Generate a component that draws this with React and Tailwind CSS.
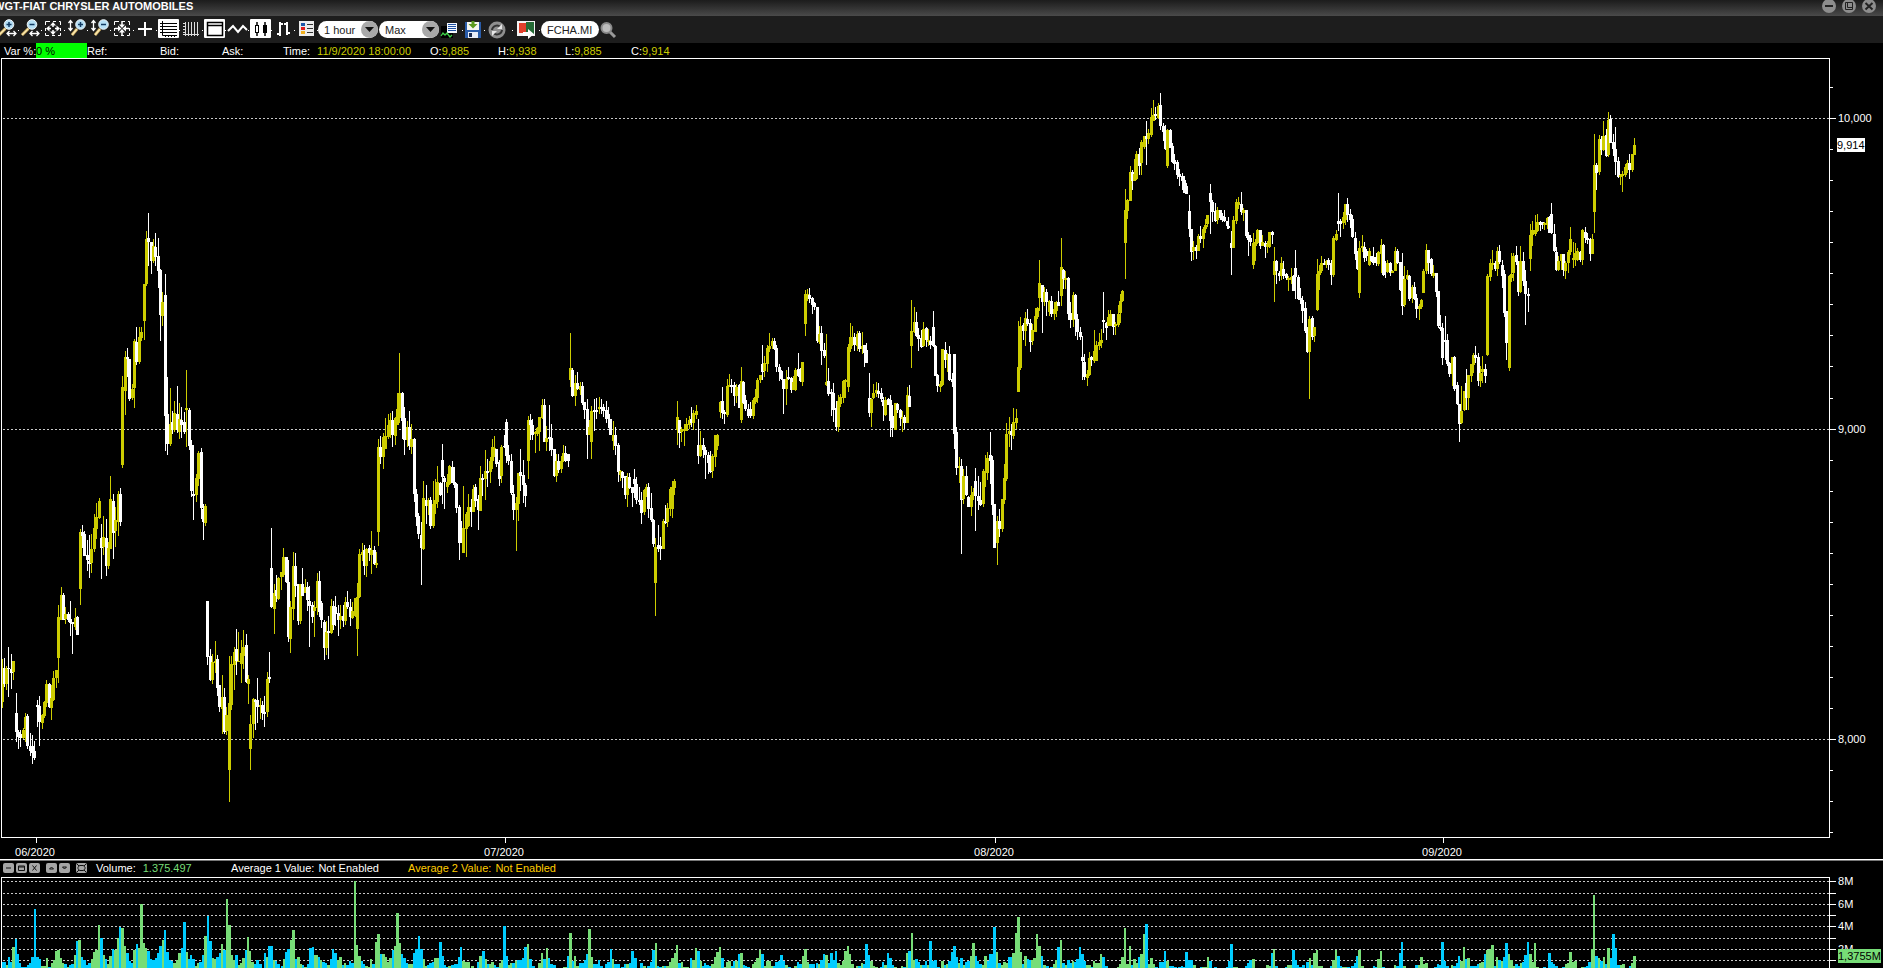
import { useState } from 'react';

const UP = '#cccc00';
const DOWN = '#ffffff';
const VOL_UP = '#77dd77';
const VOL_DOWN = '#00ccff';

// each block keeps its own origin and scale, a row is: side x high top bottom low
const PRICE_BLOCKS = [
    { x: -2, y: 121, sx: 3, sy: 2.45, rows: `
Y 7 1174 1200 1278 1293,W 13 1171 1196 1236 1242,Y 19 1191 1196 1235 1249,W 25 1144 1196 1199 1267,W 34 1161 1198 1207 1246,Y 40 1178 1178 1205 1224,
W 49 1257 1306 1352 1376,W 55 1347 1352 1365 1394,W 61 1348 1358 1368 1388,Y 70 1343 1348 1367 1370,Y 76 1306 1316 1346 1376,W 82 1308 1313 1387 1394,
W 91 1355 1387 1398 1411,W 97 1360 1387 1404 1430,W 103 1374 1399 1415 1422,W 112 1274 1286 1290 1340,W 118 1264 1289 1327 1387,Y 127 1308 1311 1330 1344,
Y 133 1276 1280 1312 1318,Y 139 1225 1235 1282 1290,W 148 1232 1235 1291 1294,Y 154 1237 1270 1294 1322,Y 160 1203 1220 1275 1276,Y 169 1200 1200 1220 1245,
Y 175 1041 1071 1171 1232,Y 184 997 1017 1077 1078,W 190 1012 1017 1077 1078,Y 196 1046 1064 1076 1089,W 205 1059 1063 1077 1083,W 211 1031 1076 1085 1117,
W 217 1083 1083 1088 1161,Y 226 1049 1074 1095 1102,W 232 1068 1071 1114 1115,Y 241 855 862 1002 1041,W 247 845 862 872 902,W 253 860 868 920 921,
W 262 881 918 932 958,W 268 870 933 941 975,Y 274 867 903 938 963,Y 283 818 853 905 911,Y 289 791 826 854 880,Y 297 779 786 827 830,
W 304 843 876 901 978,Y 310 823 875 900 919,W 319 831 876 946 970,Y 325 887 902 946 953,Y 331 725 782 904 905,W 340 769 786 864 929,
Y 346 801 833 860 899,Y 355 762 769 838 872,W 361 755 769 838 848,Y 367 480 507 698 706,Y 376 419 434 516 576,W 382 412 434 439 483,
W 388 438 438 536 541,Y 397 500 512 534 538,Y 403 390 394 510 559,W 409 360 396 446 453,Y 418 360 384 446 451,Y 424 360 373 387 395,
Y 433 254 256 346 392,Y 439 125 145 256 260,W 445 81 142 152 211,W 454 152 152 198 230,Y 460 145 162 198 203,W 466 130 163 189 211,
W 475 142 186 222 265,W 481 218 220 331 394,Y 487 274 300 332 358,W 496 230 282 577 664,W 502 483 573 646 674,Y 511 510 598 646 652,
W 517 565 593 612 623,Y 523 541 571 612 617,W 532 505 573 612 621,Y 538 546 586 617 635,W 544 556 589 600 632,W 553 568 593 617 622,
Y 559 465 559 563 654,W 568 559 563 652 661,W 574 637 650 762 777,W 580 649 770 774 833,Y 589 720 730 772 789,Y 595 664 669 733 750,
W 604 657 666 804 831,W 610 794 805 839 882,Y 616 794 799 840 848,W 623 1031 1031 1168 1188,W 631 1149 1166 1226 1228,Y 637 1161 1180 1226 1234,
Y 646 1129 1178 1183 1208,W 652 1164 1174 1245 1264,W 658 1237 1237 1290 1303,Y 667 1213 1267 1295 1357,W 673 1245 1267 1352 1357,Y 679 1291 1311 1350 1360,
Y 688 1166 1282 1445 1524,Y 694 1166 1187 1286 1298,Y 703 1144 1156 1188 1249,W 709 1100 1149 1178 1213,Y 715 1107 1178 1182 1181,Y 724 1127 1158 1187 1232,
Y 730 1102 1144 1166 1198,W 739 1112 1140 1230 1232,Y 745 1213 1223 1234 1284,Y 751 1311 1333 1394 1445,Y 760 1269 1272 1333 1367,W 766 1272 1273 1280 1347,
W 772 1220 1274 1290 1330,Y 781 1269 1287 1291 1321,W 787 1276 1287 1305 1323,W 793 1264 1303 1308 1340,Y 802 1205 1223 1303 1316,W 808 1156 1218 1223 1232,
W 814 853 951 1046 1049,Y 823 990 1012 1051 1112,W 829 968 1005 1018 1034,Y 835 973 975 1027 1030,Y 844 960 961 973 1005,Y 850 902 924 968 973,
W 859 924 924 986 987,W 865 931 985 1119 1132,Y 871 1031 1046 1124 1159,Y 880 911 946 1050 1078,W 886 914 946 995 1022,W 895 991 991 1080 1090,
Y 901 990 990 1080 1088,W 907 951 990 1018 1019,Y 916 978 997 1012 1013,W 922 985 996 1030 1056,W 928 995 1031 1043 1144,W 937 1034 1041 1070 1085,
Y 943 1031 1046 1056 1120,Y 952 963 982 1049 1066,W 958 958 982 1058 1071,W 964 1032 1036 1077 1098,W 973 1078 1083 1147 1176,Y 979 1080 1107 1147 1164,
W 985 1068 1105 1111 1174,Y 994 1027 1044 1111 1112,W 1000 1032 1044 1090 1102,W 1006 1019 1046 1063 1093,W 1015 1041 1061 1077 1117,Y 1021 1041 1068 1077 1100,
W 1030 1041 1069 1080 1094,Y 1036 1022 1034 1080 1090,W 1042 1007 1034 1046 1051,W 1051 1027 1046 1070 1093,Y 1057 1035 1057 1073 1076,Y 1066 1024 1024 1068 1070,
Y 1072 987 1022 1100 1166,Y 1078 904 916 1022 1024,Y 1087 889 911 919 933,W 1093 894 906 946 968,Y 1099 902 904 946 973,W 1108 894 902 914 933,
Y 1114 860 907 919 965,W 1123 897 906 941 943,Y 1129 911 938 943 951,Y 1135 635 654 862 897,W 1141 627 654 679 696,Y 1150 620 630 679 708,
Y 1156 583 628 659 660,Y 1165 573 600 630 634,Y 1171 571 587 617 632,W 1177 566 588 625 654,Y 1186 581 584 627 649,Y 1192 522 562 600 601,
Y 1198 424 522 583 596,W 1207 519 522 590 635,W 1213 557 583 636 674,Y 1222 590 604 636 654,W 1228 566 604 652 661,Y 1234 598 635 654 671,
W 1243 632 635 769 789,W 1249 757 769 826 848,W 1255 815 823 868 880,W 1264 838 870 902 992,Y 1270 737 779 904 907,W 1279 747 784 799 843,
Y 1285 779 783 799 821,W 1291 777 783 848 855,Y 1300 737 794 848 853,Y 1306 733 784 794 818,Y 1312 701 740 789 803,W 1321 740 742 771 773,
W 1327 647 686 728 794,W 1333 725 730 740 806,Y 1342 720 740 752 767,Y 1348 699 701 745 747,W 1357 688 703 742 743,W 1363 703 740 747 755,
W 1369 743 745 804 816,W 1378 796 801 889 931` },
    { x: 438, y: 211, sx: 3, sy: 3, rows: `
W 64 753 782 819 820,Y 71 648 775 848 849,Y 79 726 732 776 861,Y 85 672 711 768 770,W 94 687 712 726 771,Y 100 645 657 725 726,
W 106 642 651 692 711,W 115 675 687 720 780,Y 121 588 624 722 723,W 127 613 624 630 678,Y 136 540 604 627 690,W 142 567 603 610 651,
Y 151 562 574 606 639,Y 157 507 531 574 597,Y 163 498 534 560 561,W 170 537 537 582 591,W 178 570 576 627 648,Y 184 525 531 618 639,
W 193 495 528 532 533,W 199 447 456 558 579,W 205 525 556 573 585,W 214 552 573 669 675,W 220 645 672 719 750,Y 229 681 699 720 843,
Y 235 609 610 702 753,W 241 537 606 618 663,W 250 570 616 645 699,W 256 639 645 678 711,Y 264 438 450 573 627,W 271 432 450 465 510,
W 277 448 465 495 510,Y 286 484 486 492 549,Y 292 471 474 492 498,Y 298 441 442 486 543,Y 307 387 405 444 448,W 313 387 405 515 516,
Y 319 468 504 516 543,W 328 405 502 507 543,W 334 462 504 540 558,W 342 537 538 618 621,Y 349 552 573 618 636,W 355 552 573 600 609,
Y 364 557 573 598 609,Y 370 525 549 574 576,W 376 528 550 573 576,W 385 552 553 573 591,Y 391 189 294 330 351,W 397 294 299 378 381,
Y 406 315 339 378 408,W 412 306 339 357 360,Y 421 336 348 361 375,W 427 336 348 399 405,W 433 396 396 420 447,W 442 387 417 494 567,
Y 448 450 472 494 495,Y 455 408 423 516 567,W 463 387 420 426 483,W 469 384 420 426 447,Y 478 381 411 417 432,W 484 387 411 417 432,
W 490 402 411 424 441,W 499 393 421 448 459,W 505 411 433 447 474,W 511 447 447 495 496,Y 520 453 495 513 540,W 526 471 495 528 555,
W 534 519 525 606 636,Y 541 600 603 615 633,W 547 603 606 624 654,W 556 618 619 675 687,Y 562 609 621 675 711,W 568 609 621 655 657,
W 577 651 652 669 711,W 583 597 627 642 684,W 589 621 642 690 702,W 598 652 690 696 706,W 604 666 690 729 762,Y 613 657 660 726 735,
Y 619 642 651 672 681,W 625 639 651 716 744,W 634 669 714 750 756,W 640 747 750 822 831,Y 647 804 831 939 1038,W 655 765 825 837 846,
W 661 801 828 837 870,Y 669 747 753 837 838,W 676 705 753 759 762,Y 682 699 714 756 771,Y 691 651 657 716 738,Y 697 633 651 716 744,
Y 704 627 633 654 675,Y 712 393 441 480 525,W 718 450 450 488 534,Y 724 471 478 486 516,Y 733 462 477 483 528,Y 739 444 462 482 483,
Y 748 438 450 464 478,W 754 411 447 459 470,Y 760 420 430 459 480,Y 769 405 423 435 447,W 775 447 525 558 582,Y 781 483 525 558 561,
W 790 504 525 540 564,W 796 531 540 555 627,W 805 546 555 579 612,W 811 543 579 606 609,Y 817 552 558 603 624,Y 826 494 495 560 591,
Y 832 492 495 528 540,Y 840 393 396 426 444,W 847 351 393 429 447,W 853 421 426 432 462,Y 862 327 348 435 441,Y 868 312 345 350 351,
W 874 327 345 351 369,W 883 336 345 378 408,Y 889 342 351 378 399,W 898 342 346 414 415,Y 904 291 333 450 459,W 910 333 336 399 402,
W 916 375 390 418 424,W 925 402 417 438 444,W 931 396 418 438 444,Y 940 384 390 438 447,Y 946 357 381 396 402,Y 952 324 330 384 399,
Y 961 315 316 330 339,W 967 225 282 306 330,Y 973 258 279 303 321,Y 982 225 234 282 306,Y 988 189 228 236 246,Y 997 204 213 228 237,
W 1003 204 213 237 240,W 1009 225 234 291 306,W 1018 282 291 306 333,W 1024 300 303 327 330,W 1031 327 328 358 432,Y 1039 300 327 357 405,
W 1045 291 321 327 330,W 1053 321 324 361 369,Y 1060 318 336 360 361,Y 1066 294 300 360 363,W 1075 249 297 318 321,W 1081 294 312 333 336,
Y 1088 276 276 336 348,Y 1096 60 72 162 198,Y 1102 57 72 81 93,W 1108 54 74 87 99,W 1117 81 84 105 132,W 1123 96 99 111 120,
W 1132 111 111 213 219,Y 1138 168 192 216 222,W 1144 168 189 243 285,W 1152 219 240 258 264,Y 1159 192 336 345 348,W 1165 294 333 372 378,
W 1174 357 366 372 438,W 1180 339 369 420 456,W 1189 393 414 471 483,Y 1195 375 393 471 486,Y 1201 372 380 402 411,Y 1210 330 333 384 399,
Y 1216 327 330 336 384,Y 1224 222 230 351 366,Y 1231 159 201 237 246,Y 1237 168 201 208 228,W 1243 189 201 225 243,Y 1252 183 192 228 243,
W 1258 183 189 237 246,Y 1267 186 228 237 252,W 1273 225 225 249 291,W 1279 219 240 279 280,W 1288 309 384 430 441,Y 1294 384 386 429 471,
Y 1300 342 369 384 387,Y 1309 336 360 370 381,W 1315 339 363 372 384,W 1324 354 368 387 396,W 1330 381 390 408 453,Y 1336 381 390 435 438,
W 1345 384 388 405 406,W 1351 375 390 453 501,W 1357 405 438 474 501,Y 1366 399 400 480 480,W 1372 399 402 420 430,W 1381 417 420 444 468,
Y 1387 423 441 448 486,W 1393 435 441 459 477,Y 1401 351 375 458 459,W 1408 345 378 411 412` },
    { x: 858, y: 161, sx: 3, sy: 3, rows: `
Y 154 240 333 378 444,Y 163 261 306 336 339,W 169 276 306 348 350,W 175 324 346 357 393,W 184 330 354 381 384,Y 190 306 327 378 381,
W 199 321 324 360 381,Y 205 327 360 366 378,W 211 348 363 375 387,W 220 273 321 378 380,W 226 375 378 468 469,W 233 462 465 498 516,
Y 241 483 491 501 516,Y 247 387 388 495 498,W 256 366 390 420 444,Y 262 399 402 420 456,W 268 378 402 480 483,W 277 459 477 486 501,
W 283 402 402 642 687,W 290 621 636 744 765,Y 298 711 738 744 789,W 304 717 738 840 1002,Y 310 747 768 837 852,W 319 738 768 825 828,
W 325 828 831 861 862,Y 334 798 825 861 888,Y 340 804 816 825 840,W 346 744 783 828 933,W 355 768 828 843 870,W 361 786 840 855 858,
Y 369 747 753 852 861,Y 376 705 753 759 801,Y 382 696 714 759 780,W 391 636 705 723 792,W 397 708 720 855 885,W 403 852 852 984 985,
Y 411 888 903 969 1035,W 418 867 903 927 951,Y 426 837 837 927 936,Y 433 732 774 840 852,Y 439 609 642 777 783,Y 448 591 632 642 681,
W 454 612 633 645 690,Y 460 564 606 648 657,Y 469 567 594 609 627,Y 475 303 441 516 516,Y 481 291 318 444 450,W 490 309 315 333 360,
Y 496 276 294 333 378,W 502 267 297 312 318,W 511 297 309 366 396,Y 517 312 330 363 375,Y 526 264 288 336 337,Y 532 261 264 291 297,
Y 538 120 189 234 273,W 547 195 195 246 339,Y 553 201 216 246 258,W 559 207 216 246 288,Y 568 240 242 276 288,W 574 228 243 282 291,
Y 583 246 267 282 300,Y 589 243 246 272 291,W 595 213 246 258 258,Y 604 54 141 228 258,W 610 147 150 177 207,Y 616 153 174 180 207,
W 625 171 174 282 300,W 631 246 279 300 324,Y 640 216 225 300 321,W 646 222 225 297 348,W 652 282 297 336 360,W 661 321 336 351 360,
W 667 348 411 423 480,W 673 402 426 471 480,Y 682 450 462 474 498,Y 688 396 414 465 468,W 694 408 411 420 438,Y 703 330 393 423 429,
Y 709 363 375 423 424,Y 718 339 366 378 390,Y 724 327 360 369 384,W 730 216 300 306 339,W 739 306 308 324 360,Y 745 270 291 318 319,
Y 751 270 282 318 319,W 760 282 282 321 345,Y 766 306 312 318 345,Y 775 255 282 315 321,Y 781 222 243 279 309,Y 787 210 213 243 246` },
    { x: 1098, y: 21, sx: 2.8, sy: 3, rows: `
Y 71 327 390 488 597,Y 77 357 361 392 417,Y 84 258 276 363 364,W 91 270 277 303 330,Y 96 237 283 303 304,Y 103 213 222 298 300,
W 110 204 222 258 285,Y 116 180 186 249 285,Y 124 168 168 200 207,W 131 123 168 177 255,Y 136 147 160 178 192,Y 144 84 111 165 171,
Y 149 60 105 123 124,W 156 81 102 109 120,Y 163 69 78 114 117,W 169 39 75 138 150,W 177 129 138 156 183,W 183 135 150 207 210,
Y 189 147 150 258 264,W 197 147 150 204 205,W 203 189 198 246 249,W 209 222 240 252 270,W 216 240 246 284 297,W 223 267 282 291 318,
W 231 279 288 303 330,W 236 288 300 339 340,W 242 309 318 342 342,W 250 345 393 447 471,W 256 447 447 515 543,Y 262 483 501 513 540,
W 270 495 501 513 537,Y 275 462 468 513 514,W 282 438 468 477 489,Y 290 441 447 477 504,Y 296 417 435 447 459,Y 302 405 406 432 441,
W 309 312 339 366 462,W 315 360 366 396 426,W 323 369 393 423 426,Y 329 381 390 420 432,W 336 390 390 414 420,W 342 399 408 420 426,
W 348 390 411 424 426,W 356 423 424 438 447,W 361 411 438 444 446,W 369 453 489 504 585,Y 375 408 420 504 505,Y 382 357 366 424 432,
Y 388 351 366 375 387,W 396 336 372 396 405,Y 402 384 390 399 423,W 409 390 390 468 474,W 416 456 465 480 528,W 422 465 475 486 498,
Y 429 459 489 555 567,Y 436 477 486 498 543,Y 442 447 450 489 492,W 449 450 450 498 507,Y 455 465 486 497 498,W 462 483 489 501 534,
Y 469 483 492 501 519,Y 475 456 456 500 504,W 482 453 457 466 492,Y 488 501 543 585 666,W 494 540 543 573 612,W 502 573 580 588 603,
Y 508 531 549 588 600,W 514 543 567 588 597,W 521 579 582 594 600,Y 528 588 594 600 633,Y 536 564 592 600 612,W 542 585 588 633 633,
W 548 510 564 591 657,W 555 585 591 657 660,W 562 624 654 660 672,W 567 648 660 693 729,W 574 666 684 753 759,W 581 741 753 816 819,
Y 587 708 717 816 957,W 594 708 714 771 780,Y 601 741 741 768 786,Y 608 537 582 690 693,Y 614 555 573 585 630,Y 621 528 549 573 580,
W 628 537 549 555 556,Y 634 540 543 555 564,W 641 534 541 556 570,W 648 540 549 585 615,Y 654 468 474 585 591,Y 661 450 462 480 483,
W 668 339 423 432 453,W 674 417 423 432 471,Y 682 396 411 430 447,Y 688 372 372 420 435,W 694 354 372 405 426,W 701 387 402 420 444,
W 707 405 417 471 474,W 715 456 474 522 540,W 720 513 519 567 570,Y 727 483 504 639 654,Y 735 465 498 504 516,W 740 486 501 534 546,
W 747 507 512 528 543,Y 754 504 513 555 558,W 760 534 528 543 546,W 766 501 530 549 555,W 774 519 531 550 558,Y 780 513 516 553 558,
Y 788 477 495 522 579,W 794 492 495 585 587,W 800 543 567 576 594,Y 806 540 549 576 579,W 814 546 549 579 588,Y 820 570 573 579 579,
Y 828 501 513 573 573,W 834 507 513 549 552,W 841 546 546 630 633,W 848 519 588 678 705,Y 853 558 597 675 681,Y 860 570 585 597 600,
W 867 585 588 657 664,Y 874 615 621 655 669,W 881 606 621 657 660,W 887 642 655 688 714,Y 894 672 678 688 720,Y 901 657 660 681 687,
Y 907 567 573 639 639,Y 915 492 510 573 582,W 921 510 510 549 582,W 927 534 537 582 588,Y 934 555 579 588 594,W 941 579 579 636 651,
W 947 633 633 738 744,W 954 705 741 747 753,W 960 729 744 834 855,W 968 708 780 786 840,W 973 762 780 852 857,W 979 846 849 882 891,
Y 987 831 831 882 918,W 993 828 831 927 933,W 1000 906 915 972 975,W 1006 972 972 1032 1086,Y 1012 918 993 1029 1032,Y 1020 933 933 990 993,
W 1027 867 909 953 990,Y 1032 885 885 953 990,Y 1040 852 852 888 906,Y 1046 819 825 855 879,W 1052 798 825 834 849,W 1059 819 831 903 918,
Y 1066 858 879 903 921,Y 1071 828 867 876 909,W 1080 852 867 888 909,Y 1086 582 588 825 828,Y 1094 537 549 591 603,Y 1100 510 549 555 570,
W 1107 543 549 567 573,Y 1113 501 513 567 588,W 1119 495 513 546 552,W 1126 540 555 588 624,W 1133 570 582 699 711,W 1139 693 694 789 840,
Y 1146 585 588 864 873,Y 1153 519 582 594 606,Y 1159 519 528 580 603,W 1166 498 525 546 555,W 1172 543 546 636 648,Y 1178 498 543 636 639,
W 1186 516 543 603 618,W 1192 570 603 642 735,W 1199 624 642 648 696,Y 1206 432 465 537 573,Y 1212 423 450 465 498,Y 1219 405 450 462 468,
Y 1225 402 426 453 456,W 1232 423 426 435 453,W 1239 426 426 433 447,Y 1245 426 429 435 450,Y 1252 411 414 435 447,W 1258 408 411 459 460,
W 1264 369 402 459 462,W 1272 432 462 513 516,W 1279 501 516 570 573,Y 1285 528 543 570 573,Y 1292 522 522 543 570,W 1298 522 522 570 588,
Y 1304 543 549 573 597,Y 1312 510 516 549 579,Y 1318 441 477 516 525,Y 1326 486 534 540 564,Y 1332 489 519 537 558,Y 1338 504 513 540 543,
W 1345 513 516 540 546,Y 1352 447 450 540 555,W 1358 441 456 474 489,W 1366 459 474 480 492,W 1372 474 477 521 543,Y 1379 462 477 521 522,
Y 1385 162 255 396 459,W 1391 249 255 279 330,Y 1398 165 177 276 285,W 1404 168 177 210 225,Y 1410 123 168 210 213,W 1417 147 165 228 231,
Y 1424 96 120 225 231,W 1430 105 117 188 189,W 1438 162 186 207 228,W 1444 141 207 246 285,W 1451 231 243 291 294,Y 1457 282 285 291 315,
Y 1463 273 282 288 336,Y 1471 252 261 285 291,Y 1477 240 249 267 279,W 1483 222 249 270 297,Y 1491 222 222 270 276,Y 1497 174 195 225 225` },
];

// a row is: side x top
const VOLUME_BLOCKS = [
    { x: -2, sx: 2.613, rows: `
B 5 396,B 11 396,G 15 405,B 21 381,B 26 396,G 32 351,B 38 327,B 44 372,B 50 399,B 56 411,B 63 411,B 70 405,B 76 399,B 82 381,B 89 237,B 95 381,B 101 387,G 107 408,G 113 408,G 120 384,
B 126 411,G 132 399,G 138 391,G 144 363,G 150 360,G 156 384,G 162 400,B 168 402,G 174 411,B 180 405,B 186 402,G 193 375,B 199 333,G 205 330,B 212 381,B 218 391,B 225 405,B 231 399,
G 238 387,G 243 366,G 249 360,G 255 285,B 261 324,G 268 375,B 274 387,G 280 402,G 286 378,B 292 357,G 299 360,G 305 324,B 311 291,G 317 294,G 323 348,B 329 369,B 336 393,B 342 399,
G 348 360,B 355 342,G 361 354,G 366 222,G 373 339,G 379 354,B 385 363,B 391 387,B 397 390,B 404 384,B 410 369,B 416 348,G 423 330,B 429 300,B 435 366,B 441 390,B 447 393,G 453 399,
G 459 390,G 465 369,B 473 354,B 478 276,G 485 366,B 491 387,B 497 375,B 503 387,G 509 408,G 515 398,B 520 396,B 527 375,G 533 318,B 540 258,B 546 333,G 553 384,G 559 387,B 565 381,
B 572 369,G 578 342,B 584 360,G 590 207,G 597 285,G 603 375,G 609 390,B 615 375,G 621 405,G 628 399,G 633 384,B 640 360,G 645 321,G 651 363,G 657 396,B 664 402,B 670 390,B 676 402,
B 689 369,G 695 381,B 701 348,B 707 348,G 713 390,B 719 393,B 725 402,B 733 408,G 739 387,B 745 366,B 751 357,G 758 330,G 764 300,B 770 387,G 776 381,G 783 402,B 789 405,G 795 411,
B 801 402,B 808 354,B 814 351,G 820 375,G 825 375,B 830 381,G 836 390,B 842 396,B 848 399,G 855 405,B 861 387,B 867 357,B 874 369,G 880 390,G 886 381,B 893 405,G 899 399,B 905 405,
B 911 393,B 918 399,G 924 153,G 930 345,G 936 378,B 943 393,B 949 402,G 955 408,G 961 411,G 967 387,B 973 402,G 980 336,G 985 312,B 992 372,G 998 372,G 1005 381,G 1011 396,G 1017 384,
B 1023 360,G 1029 348,G 1035 249,G 1042 339,B 1048 372,B 1054 384,B 1060 399,G 1066 402,G 1073 402,B 1079 369,B 1085 357,B 1091 318,B 1097 357,G 1104 387,G 1110 408,B 1116 405,B 1122 399,
B 1128 397,G 1134 384,G 1140 384,B 1147 336,B 1154 378,B 1160 405,B 1166 411,G 1170 408,B 1178 405,B 1185 402,B 1191 402,B 1197 381,B 1202 351,G 1208 393,G 1214 397,G 1220 395,G 1232 408,
B 1246 396,G 1252 378,B 1259 363,G 1266 387,B 1272 402,G 1278 403,G 1284 396,B 1290 405,B 1297 411,G 1303 399,G 1309 390,B 1315 288,B 1321 378,G 1327 405,G 1333 399,B 1339 399,G 1345 393,
B 1352 390,B 1358 389,B 1364 384,B 1370 351,G 1377 342,B 1383 387,B 1389 408,G 1405 399,G 1413 369,B 1419 387,G 1426 354,B 1432 384,B 1438 402,B 1445 405,G 1470 411,G 1476 411,B 1481 378,
G 1488 309,B 1494 393,G 1500 378,G 1506 408,B 1512 399,B 1518 399,B 1525 390,B 1531 372,G 1537 297,G 1543 381,B 1550 402,B 1556 402,B 1562 390` },
    { x: 598, sx: 3, rows: `
B 0 408,B 15 402,B 21 396,B 29 357,G 36 387,B 43 402,B 50 402,B 63 411,B 71 402,G 78 402,B 86 399,B 93 363,B 101 384,B 120 399,G 128 408,B 141 408,B 150 396,B 156 360,G 165 339,
B 171 408,B 178 411,G 186 408,B 192 408,G 199 408,G 207 396,G 213 384,G 221 369,G 228 345,B 235 399,G 243 396,G 249 411,G 257 411,B 270 384,G 277 390,G 285 354,B 292 363,G 300 393,
B 306 408,B 312 399,B 319 405,B 326 408,G 333 402,G 342 381,G 348 366,G 356 351,B 363 384,G 371 411,G 378 396,G 385 393,B 392 408,B 399 393,G 405 393,B 414 372,G 421 369,B 429 405,
B 435 408,B 442 411,G 456 402,G 462 396,G 469 384,G 477 360,B 484 372,G 492 408,G 498 393,G 506 393,G 513 408,B 519 408,B 526 396,B 534 393,B 540 375,B 548 393,G 556 405,B 564 411,
G 582 408,B 591 396,B 598 402,G 606 378,G 613 357,G 620 396,B 627 402,B 635 402,B 648 399,G 654 402,B 660 390,B 669 372,G 676 375,B 684 399,B 690 369,B 698 390,B 704 363,G 711 399,
G 720 405,G 726 393,G 732 363,G 740 348,G 747 372,G 754 402,G 768 408,B 774 408,G 782 399,B 788 402,B 795 342,B 804 375,G 811 393,G 818 408,G 825 411,B 840 411,B 846 396,G 853 405,
B 861 369,B 867 384,B 875 405,G 883 411,G 903 408,B 910 411,G 918 369,B 924 363,G 932 309,G 939 390,B 946 387,B 954 396,G 960 405,B 967 405,B 975 393,G 981 405,B 987 333,B 996 393,
B 1003 390,B 1011 411,G 1022 393,B 1031 405,G 1038 402,B 1045 393,B 1053 366,B 1059 348,B 1067 381,G 1074 399,B 1080 384,G 1088 405,B 1095 396,B 1102 393,G 1110 378,G 1116 339,B 1124 378,
B 1131 393,B 1138 402,G 1145 405,G 1152 378,B 1160 393,B 1167 372,B 1173 372,B 1179 291,G 1188 366,B 1194 399,G 1202 405,G 1209 396,G 1217 399,B 1224 381,B 1230 381,G 1237 369,G 1244 309,
G 1251 261,G 1259 366,B 1266 402,G 1272 378,B 1280 387,B 1287 390,G 1293 390,G 1300 384,G 1308 312,G 1315 348` },
    { x: 1038, sx: 3, rows: `
B 3 378,G 10 405,B 17 408,B 30 411,G 39 402,G 45 390,B 51 351,G 60 330,B 66 399,G 74 405,B 81 390,B 89 399,G 96 393,B 102 396,B 109 387,B 117 351,B 123 372,B 131 393,G 138 405,
G 146 405,B 153 411,G 160 393,G 166 399,G 173 399,G 180 372,B 187 381,B 195 408,G 231 411,G 237 402,G 243 381,G 252 294,G 258 402,G 266 348,B 273 405,G 279 387,G 287 399,B 294 381,
G 300 372,G 309 312,B 315 282,G 324 402,G 330 384,G 338 402,B 345 411,B 357 396,B 365 396,B 372 363,G 378 393,B 387 408,B 395 408,B 402 411,B 414 411,B 422 408,B 429 411,B 435 366,
B 444 390,B 452 390,G 459 405,B 480 411,G 487 411,G 494 411,G 501 381,B 508 393,B 522 411,B 558 411,B 565 393,B 570 342,G 579 411,G 586 411,B 615 408,B 621 399,B 628 390,G 636 387,
G 678 405,G 686 408,B 693 369,G 699 357,B 706 408,B 735 411,G 741 405,G 748 405,B 756 360,B 764 390,B 771 405,B 778 411,B 786 405,B 798 396,G 807 384,B 813 405,G 819 369,G 827 360,
G 834 408,G 841 408,B 870 408,G 876 390,G 884 360,B 891 378,B 899 408,G 906 411,G 913 411,B 920 411,B 933 408,B 941 399,B 948 378,G 954 360,G 962 408,B 999 408,B 1006 411,G 1011 387,
G 1019 363,B 1026 411,G 1062 405,B 1068 408,B 1077 369,B 1083 336,G 1090 408,B 1125 405,G 1133 405,G 1140 381,G 1148 402,G 1155 399,B 1182 411,B 1191 402,B 1197 405,B 1203 336,B 1211 393,
B 1218 408,G 1233 405,B 1240 408,B 1248 399,B 1254 378,G 1261 393,G 1269 351,B 1275 387,G 1282 384,B 1290 408,B 1297 408,B 1304 408,B 1311 402,G 1317 399` },
    { x: 1478, sx: 3, rows: `
G 3 396,B 12 372,G 18 360,G 26 357,G 33 345,B 41 408,G 48 381,B 54 390,G 62 393,B 68 381,B 75 339,G 84 372,G 90 390,G 98 408,B 105 402,B 113 408,G 119 399,B 125 396,B 132 375,B 141 336,
G 147 372,G 155 396,G 162 339,G 169 411,B 190 411,B 204 369,B 212 396,B 219 402,B 226 408,B 246 411,G 255 402,G 262 399,G 267 366,G 276 396,G 283 393,G 303 411,B 311 411,B 318 408,
B 324 396,G 333 357,G 339 195,B 346 378,G 354 384,B 361 393,G 369 381,B 375 402,G 381 354,B 390 384,B 396 312,B 404 354,B 411 405,G 419 405,G 425 402,B 447 408,G 453 399,G 459 378` },
];

function parseRows(rows) {
    return rows.trim().split(',').map(row => {
        const [side, ...values] = row.trim().split(' ');
        return { side, values: values.map(Number) };
    });
}

const candles = PRICE_BLOCKS.flatMap(block =>
    parseRows(block.rows).map(({ side, values }) => {
        const [high, top, bottom, low] = values.slice(1).map(v => Math.round(block.y + v / block.sy));
        return { color: side === 'Y' ? UP : DOWN, x: block.x + Math.floor(values[0] / block.sx), high, top, bottom, low };
    })
);

const bars = VOLUME_BLOCKS.flatMap(block =>
    parseRows(block.rows).map(({ side, values }) => ({
        color: side === 'G' ? VOL_UP : VOL_DOWN,
        x: block.x + Math.round(values[0] / block.sx),
        top: Math.round(values[1] / 3) - 48,
    }))
);

const PRICE_LINES = [59, 370, 680];
const VOLUME_LINES = [3, 15, 26, 37, 48, 60, 71, 82];
const MONTHS = [
    { x: 36, label: '06/2020' },
    { x: 505, label: '07/2020' },
    { x: 995, label: '08/2020' },
    { x: 1443, label: '09/2020' },
];

function GridLine({ y }) {
    return <line x1="1" x2="100%" y1={y + 0.5} y2={y + 0.5} stroke="#c8c8c8" strokeDasharray="2 2" />;
}

function Lens({ sign, vertical }) {
    return (
        <>
            <path d={vertical ? 'M12 13 7 19' : 'M9.500 12.500 3 19'} stroke="#c9a85c" strokeWidth="3" />
            <path d={vertical ? 'M12 13 7 19' : 'M9.500 12.500 3 19'} stroke="#fbe9b0" strokeWidth="1.500" />
            <circle cx={vertical ? 15.5 : 13} cy="8.500" r="4.800" fill="#b5dff5" stroke="#f2f7fa" strokeWidth="1" />
            <path d={vertical ? 'M13 8.500h5' : 'M10.500 8.500h5'} stroke="#123a63" strokeWidth="1.500" />
            {sign === '+' && <path d={vertical ? 'M15.500 6v5' : 'M13 6v5'} stroke="#123a63" strokeWidth="1.500" />}
            {vertical
                ? <path d="M5.500 5v9M3.500 7l2-2.500 2 2.500M3.500 12l2 2.500 2-2.500" stroke="#fff" strokeWidth="1.300" />
                : <path d="M11 17.500h9M13.500 15l-2.500 2.500 2.500 2.500M17.500 15l2.500 2.500-2.500 2.500" stroke="#fff" strokeWidth="1.300" />}
        </>
    );
}

function Frame() {
    return <path d="M3.500 9V5.500H8M11 5.500h3M17 5.500h1.500V9M18.500 12v3M18.500 17v2.500H16M13 19.500h-3M7 19.500H3.500V17M3.500 15v-3" stroke="#fff" strokeWidth="1" />;
}

const TOOLS = [
    { name: 'Zoom in horizontally', icon: <Lens sign="+" /> },
    { name: 'Zoom out horizontally', icon: <Lens sign="-" /> },
    {
        name: 'Expand all',
        icon: <><Frame /><path d="M11 8v3M11 14v3M6 12.500h3M13 12.500h3" stroke="#fff" strokeWidth="1.500" /><path d="M8 9.500 11 6l3 3.500zM8 15.500l3 3.500 3-3.500zM7.500 9.500l-3.500 3 3.500 3zM14.500 9.500l3.500 3-3.500 3z" fill="#fff" /></>,
    },
    { name: 'Zoom in vertically', icon: <Lens sign="+" vertical /> },
    { name: 'Zoom out vertically', icon: <Lens sign="-" vertical /> },
    {
        name: 'Fit all',
        icon: <><Frame /><path d="M11 5v4M11 16v4M4 12.500h4M14 12.500h4" stroke="#fff" strokeWidth="1.500" /><path d="M8 8.500l3 3.500 3-3.500zM8 16.500l3-3.500 3 3.500zM7 9.500l3.500 3-3.500 3zM15 9.500l-3.500 3 3.500 3z" fill="#fff" /></>,
    },
    { name: 'Crosshair', icon: <path d="M11 6v5M11 15v5M4 13h6M12 13h6M11 11v4" stroke="#fff" strokeWidth="2" /> },
    {
        name: 'Horizontal grid', active: true,
        icon: <path d="M5.500 5v14.500H20M3 7.500h17M3 10.500h17M3 13.500h17M3 16.500h17M8.500 19v2M11.500 19v2M14.500 19v2M17.500 19v2" stroke="#000" strokeWidth="1" />,
    },
    {
        name: 'Vertical grid',
        icon: <path d="M3 18.500h16M5.500 6v14M8.500 6v14M11.500 6v14M14.500 6v14M17.500 6v14M3 7.500h2M3 10.500h2M3 13.500h2M3 16.500h2" stroke="#ddd" strokeWidth="1" />,
    },
    { name: 'Window', active: true, icon: <path d="M4.500 6.500h15v13h-15zM4.500 9.500h15" stroke="#000" strokeWidth="1.500" /> },
    { name: 'Line chart', icon: <path d="M2 15l5-5 5 6 5-6 4 4" stroke="#fff" strokeWidth="2" /> },
    {
        name: 'Candle chart', active: true,
        icon: <><path d="M8 6v14M16 6v14" stroke="#000" strokeWidth="1.500" /><rect x="6.500" y="9.500" width="3" height="7" fill="#fff" stroke="#000" /><rect x="14" y="9" width="4" height="8" fill="#000" /></>,
    },
    { name: 'Bar chart', icon: <path d="M8 6v14M5 18h3M8 8h3M15 6v13M12 8h3M15 17h3" stroke="#fff" strokeWidth="2" /> },
    {
        name: 'Legend',
        icon: (
            <>
                <rect x="4" y="5" width="15" height="15" fill="#ececec" />
                <path d="M6 7h4v3H6z" fill="#1c56a8" /><path d="M6 11h4v3H6z" fill="#e01b1b" /><path d="M6 15h4v3H6z" fill="#f2b01e" />
                <path d="M12 8.500h6M12 12.500h6M12 16.500h6" stroke="#333" strokeWidth="1" />
            </>
        ),
    },
];

function Tool({ name, active, icon }) {
    return (
        <button type="button" aria-label={name} className="flex h-6 w-[23px] shrink-0 items-center">
            <svg width="23" height="27" viewBox="0 0 23 27" fill="none" className="shrink-0">
                {active && <rect x="1" y="3" width="21" height="19" rx="1" fill="#fff" />}
                {icon}
                <rect x="22" y="14" width="1" height="1" fill="#fff" />
            </svg>
        </button>
    );
}

function Dropdown({ label, options }) {
    const [value, setValue] = useState(options[0]);
    return (
        <label className="relative flex h-[17px] w-[60px] shrink-0 items-center rounded-full bg-white">
            <select
                aria-label={label}
                value={value}
                onChange={ev => setValue(ev.target.value)}
                className="h-full w-full appearance-none rounded-full pl-[6px] text-[11px] leading-4 text-[#222]"
            >
                {options.map(option => <option key={option}>{option}</option>)}
            </select>
            <svg width="17" height="17" viewBox="0 0 17 17" className="pointer-events-none absolute right-0 top-0">
                <circle cx="8.5" cy="8.5" r="8.5" fill="#a9a9a9" />
                <path d="M4 6h9l-4.500 5z" fill="#111" />
            </svg>
        </label>
    );
}

function WindowButton({ label, children }) {
    return (
        <button type="button" aria-label={label} className="h-[14px] w-[14px]">
            <svg width="14" height="14" viewBox="0 0 14 14" fill="none">
                <circle cx="7" cy="6" r="7" fill="#8d8d8d" />
                {children}
            </svg>
        </button>
    );
}

function TitleBar() {
    return (
        <header className="flex h-4 shrink-0 items-start justify-between overflow-hidden bg-linear-to-b from-[#1c1c1c] to-[#4a4a4a] pr-[7px]">
            <h1 className="-ml-[6px] whitespace-nowrap text-[11px] leading-3 font-bold text-white">WGT-FIAT CHRYSLER AUTOMOBILES</h1>
            <div className="flex gap-[6px]">
                <WindowButton label="Minimize"><path d="M3 6h8" stroke="#222" strokeWidth="2" /></WindowButton>
                <WindowButton label="Restore"><path d="M3.500 2.500h7v7h-7zM5.500 2.500V7.500h5" stroke="#222" strokeWidth="1" /></WindowButton>
                <WindowButton label="Close"><path d="M3.500 3l7 6.500M10.500 3l-7 6.500" stroke="#222" strokeWidth="2" /></WindowButton>
            </div>
        </header>
    );
}

function Toolbar() {
    const [symbol, setSymbol] = useState('FCHA.MI');
    return (
        <div className="flex h-[27px] shrink-0 items-center overflow-hidden bg-[#1d1d1d]">
            <div className="-ml-1 flex">
                {TOOLS.map(tool => <Tool key={tool.name} {...tool} />)}
            </div>
            <div className="flex gap-px">
                <Dropdown label="Interval" options={['1 hour', '1 day', '1 week']} />
                <Dropdown label="Range" options={['Max', '1 year', '1 month']} />
            </div>
            <button type="button" aria-label="Studies" className="w-6 shrink-0">
                <svg width="24" height="18" viewBox="0 0 24 18" fill="none">
                    <path d="M2 5h6v12H2zM8 12h6v5H8z" fill="#000" />
                    <rect x="8" y="2" width="10" height="10" fill="#f4f8ff" />
                    <path d="M9 3.500h8M9 5.500h8M9 7.500h8M9 9.500h8" stroke="#1d4fa0" strokeWidth="1" />
                    <path d="M2 15l2-3 2 2 2-2 3 4 2-2" stroke="#3fd24a" strokeWidth="1.300" />
                    <rect x="23" y="9" width="1" height="1" fill="#fff" />
                </svg>
            </button>
            <button type="button" aria-label="Save" className="w-[23px] shrink-0">
                <svg width="23" height="18" viewBox="0 0 23 18" fill="none">
                    <path d="M2 1h16v16H2z" fill="#2a5ca8" />
                    <path d="M4 1h12v8H4z" fill="#f6f6f0" /><path d="M5 11h10v6H5z" fill="#e8eef8" />
                    <path d="M6 12h3v4H6z" fill="#1a2a50" />
                    <path d="M8.500 0h3v3h3L10 7.500 5.500 3h3z" fill="#5b9a1f" />
                    <rect x="21" y="9" width="1" height="1" fill="#fff" />
                </svg>
            </button>
            <button type="button" aria-label="Refresh" className="w-[26px] shrink-0">
                <svg width="26" height="18" viewBox="0 0 26 18" fill="none">
                    <circle cx="11" cy="9" r="8.500" fill="#8f8f8f" />
                    <path d="M6 9a5 5 0 0 1 8.500-3M16 9a5 5 0 0 1-8.500 3" stroke="#333" strokeWidth="2" />
                    <path d="M16 3v5h-5zM6 15v-5h5z" fill="#e6e6e6" />
                </svg>
            </button>
            <button type="button" aria-label="Exit" className="w-[29px] shrink-0">
                <svg width="29" height="20" viewBox="0 0 29 20" fill="none">
                    <rect x="0" y="10" width="1" height="1" fill="#fff" />
                    <path d="M5 1h18v15H5z" fill="#f4f4f4" />
                    <path d="M7 3h7v10H7z" fill="#e2402c" /><path d="M14 2h8v12h-8z" fill="#246b35" />
                    <path d="M11 12h5V9l6 5-6 5v-3h-5z" fill="#fff" />
                    <rect x="27" y="10" width="1" height="1" fill="#fff" />
                </svg>
            </button>
            <input
                aria-label="Symbol"
                value={symbol}
                onChange={ev => setSymbol(ev.target.value)}
                className="h-[17px] w-[58px] shrink-0 rounded-full bg-white pl-[6px] text-[11px] leading-4 text-[#222]"
            />
            <button type="button" aria-label="Search" className="w-5 shrink-0">
                <svg width="20" height="18" viewBox="0 0 20 18" fill="none">
                    <path d="M10 10l6 6" stroke="#9a9a9a" strokeWidth="3" />
                    <circle cx="7.500" cy="7" r="5" fill="#bdbdbd" stroke="#8a8a8a" strokeWidth="2" />
                </svg>
            </button>
        </div>
    );
}

function Quote({ label, value, className }) {
    return (
        <div className={className}>
            <span>{label}:</span><span className="text-[#cccc00]">{value}</span>
        </div>
    );
}

function QuoteRow() {
    return (
        <div className="flex h-[15px] shrink-0 overflow-hidden whitespace-nowrap leading-4">
            <span className="w-9 shrink-0 pl-[4px]">Var %:</span>
            <span className="w-[51px] shrink-0 bg-[#00ff00] text-black">0 %</span>
            <Quote label="Ref" className="w-[73px]" />
            <Quote label="Bid" className="w-[62px]" />
            <Quote label="Ask" className="w-[61px]" />
            <div className="flex w-[147px] gap-[7px]">
                <span>Time:</span><span className="text-[#cccc00]">11/9/2020 18:00:00</span>
            </div>
            <Quote label="O" value="9,885" className="w-[68px]" />
            <Quote label="H" value="9,938" className="w-[67px]" />
            <Quote label="L" value="9,885" className="w-[66px]" />
            <Quote label="C" value="9,914" className="w-[66px]" />
        </div>
    );
}

function PriceChart() {
    const ticks = Array.from({ length: 25 }, (_, i) => Math.round(28 + i * 31.05));
    return (
        <section className="flex shrink-0 pl-px" aria-label="Price">
            <div className="min-w-0 flex-1 border border-white">
                <svg className="block h-[778px] w-full" shapeRendering="crispEdges">
                    {PRICE_LINES.map(y => <GridLine key={y} y={y} />)}
                    {candles.map((c, i) => (
                        <g key={i} fill={c.color}>
                            <rect x={c.x} y={c.high} width="1" height={Math.max(c.low - c.high, 1)} />
                            <rect x={c.x - 1} y={c.top} width="3" height={Math.max(c.bottom - c.top, 1)} />
                        </g>
                    ))}
                </svg>
            </div>
            <div className="relative w-[53px] shrink-0">
                <svg className="block h-[780px] w-full" fill="#fff">
                    {ticks.map(y => <rect key={y} x="0" y={y + 1} width="3" height="1" />)}
                    {PRICE_LINES.map((y, i) => (
                        <g key={y}>
                            <rect x="0" y={y + 1} width="6" height="1" />
                            <text x="8" y={y + 5}>{['10,000', '9,000', '8,000'][i]}</text>
                        </g>
                    ))}
                </svg>
                <span className="absolute left-[7px] top-20 h-[14px] bg-white leading-[14px] text-black">9,914</span>
            </div>
        </section>
    );
}

function DateAxis() {
    return (
        <svg className="block h-[21px] w-full shrink-0" fill="#fff">
            {MONTHS.map(m => (
                <g key={m.label}>
                    <rect x={m.x} y="0" width="1" height="5" />
                    <text x={m.x - 1} y="18" textAnchor="middle">{m.label}</text>
                </g>
            ))}
        </svg>
    );
}

const PANEL_BUTTONS = [
    { name: 'Minimize panel', d: 'M3 5h5' },
    { name: 'Maximize panel', d: 'M2.500 3h6v4.500h-6zM2.500 4h6' },
    { name: 'Close panel', d: 'M3.500 2.500l4 5M7.500 2.500l-4 5' },
    { name: 'Move panel up', d: 'M3.500 6h4L5.500 4z', gap: true },
    { name: 'Move panel down', d: 'M3.500 4h4L5.500 6z' },
    { name: 'Panel settings', d: 'M3.500 2.500h4l1.500 2v1l-1.500 2h-4L2 5.500v-1zM1 1l2 2M10 1 8 3M1 9l2-2M10 9 8 7', gap: true },
];

function VolumeBar() {
    return (
        <div className="flex h-4 shrink-0 items-start whitespace-nowrap leading-[15px]">
            <div className="flex gap-[2px] pt-[2px] pl-[3px]">
                {PANEL_BUTTONS.map(b => (
                    <button key={b.name} type="button" aria-label={b.name} className={b.gap ? 'ml-1' : ''}>
                        <svg width="11" height="10" viewBox="0 0 11 10" fill="none" className="block">
                            <rect width="11" height="10" rx="2" fill="#a6a6a6" />
                            <path d={b.d} stroke="#111" strokeWidth="1" />
                        </svg>
                    </button>
                ))}
            </div>
            <div className="ml-[9px] flex w-[135px] gap-[7px]"><span>Volume:</span><span className="text-[#77dd77]">1.375.497</span></div>
            <div className="flex w-[177px] gap-1"><span>Average 1 Value:</span><span>Not Enabled</span></div>
            <div className="flex gap-1 text-[#ffcc00]"><span>Average 2 Value:</span><span>Not Enabled</span></div>
        </div>
    );
}

function VolumeChart() {
    return (
        <section className="flex shrink-0 pl-px" aria-label="Volume">
            <div className="min-w-0 flex-1 border border-b-0 border-white">
                <svg className="block h-[90px] w-full" shapeRendering="crispEdges">
                    {VOLUME_LINES.map(y => <GridLine key={y} y={y} />)}
                    {bars.map((bar, i) => {
                        const next = bars[i + 1];
                        const width = next ? Math.min(3, next.x - bar.x) : 3;
                        return <rect key={i} x={bar.x} y={bar.top} width={width} height={90 - bar.top} fill={bar.color} />;
                    })}
                </svg>
            </div>
            <div className="relative w-[53px] shrink-0">
                <svg className="block h-[91px] w-full overflow-visible" fill="#fff">
                    {VOLUME_LINES.map((y, i) => (
                        <g key={y}>
                            <rect x="0" y={y + 1} width="6" height="1" />
                            {i % 2 === 0 && <text x="8" y={y + 5}>{8 - i}M</text>}
                        </g>
                    ))}
                </svg>
                <span className="absolute left-2 top-[72px] h-[14px] bg-[#77dd77] leading-[14px] text-black">1,3755M</span>
            </div>
        </section>
    );
}

export default function App() {
    return (
        <main className="flex min-h-screen flex-col overflow-hidden bg-black font-['Liberation_Sans',Arial,sans-serif] text-[11px] leading-4 text-white">
            <TitleBar />
            <Toolbar />
            <QuoteRow />
            <PriceChart />
            <DateAxis />
            <div className="h-[2px] shrink-0 border-b border-[#777] bg-white" />
            <VolumeBar />
            <VolumeChart />
        </main>
    );
}
